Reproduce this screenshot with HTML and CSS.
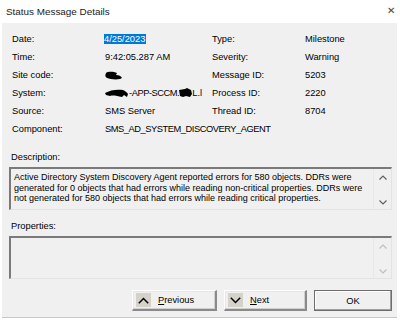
FILE: index.html
```html
<!DOCTYPE html>
<html lang="en">
<head>
    <meta charset="UTF-8">
    <meta name="viewport" content="width=device-width, initial-scale=1.0">
    <title>Status Message Details</title>
    <link rel="stylesheet" href="styles.css">
</head>
<body>
    <div class="window">
        <div class="titlebar">
            <span class="title">Status Message Details</span>
            <span class="close">&#x2715;</span>
        </div>
        <div class="client">
            <div class="details">
                <span class="label">Date:</span>
                <span class="value"><span class="selected">4/25/2023</span></span>
                <span class="label">Type:</span>
                <span class="value">Milestone</span>

                <span class="label">Time:</span>
                <span class="value">9:42:05.287 AM</span>
                <span class="label">Severity:</span>
                <span class="value">Warning</span>

                <span class="label">Site code:</span>
                <span class="value">
                    <svg class="scribble" width="18" height="9" viewBox="0 0 18 9">
                        <path d="M1 2 C4 0 9 1 12 2 L11 4 C14 4 16 5 17 7 L15 8 C10 9 5 8 2 7 C0 6 0 4 1 2 Z" fill="#000"/>
                    </svg>
                </span>
                <span class="label">Message ID:</span>
                <span class="value">5203</span>

                <span class="label">System:</span>
                <span class="value nowrap">
                    <svg class="scribble" width="24" height="9" viewBox="0 0 24 9">
                        <path d="M0 4 C5 1 12 0 18 1 C20 2 22 3 23 5 L22 8 L19 6 L17 8 C12 7 8 6 5 7 L1 6 Z" fill="#000"/>
                    </svg><span class="caps">-APP-SCCM.</span><svg class="scribble" width="13" height="10" viewBox="0 0 13 10">
                        <path d="M0 2 L6 1 L8 0 L12 2 L13 6 L11 9 L7 8 L4 9 L1 8 Z" fill="#000"/>
                    </svg>L.l
                </span>
                <span class="label">Process ID:</span>
                <span class="value">2220</span>

                <span class="label">Source:</span>
                <span class="value">SMS Server</span>
                <span class="label">Thread ID:</span>
                <span class="value">8704</span>

                <span class="label">Component:</span>
                <span class="value wide caps">SMS_AD_SYSTEM_DISCOVERY_AGENT</span>
            </div>

            <div class="section-label">Description:</div>
            <div class="textbox description">
                <div class="text">Active Directory System Discovery Agent reported errors for 580 objects. DDRs were<br>generated for 0 objects that had errors while reading non-critical properties. DDRs were<br>not generated for 580 objects that had errors while reading critical properties.</div>
                <div class="scrollbar">
                    <svg width="8" height="5" viewBox="0 0 8 5"><path d="M0.5 4.5 L4 1 L7.5 4.5" fill="none" stroke="#606060" stroke-width="1.2"/></svg>
                    <svg width="8" height="5" viewBox="0 0 8 5"><path d="M0.5 0.5 L4 4 L7.5 0.5" fill="none" stroke="#606060" stroke-width="1.2"/></svg>
                </div>
            </div>

            <div class="section-label second">Properties:</div>
            <div class="textbox properties">
                <div class="text"></div>
                <div class="scrollbar disabled">
                    <svg width="8" height="5" viewBox="0 0 8 5"><path d="M0.5 4.5 L4 1 L7.5 4.5" fill="none" stroke="#bfbfbf" stroke-width="1.2"/></svg>
                    <svg width="8" height="5" viewBox="0 0 8 5"><path d="M0.5 0.5 L4 4 L7.5 0.5" fill="none" stroke="#bfbfbf" stroke-width="1.2"/></svg>
                </div>
            </div>

            <div class="buttons">
                <button class="btn nav prev">
                    <span class="arrow"><svg width="11" height="7" viewBox="0 0 11 7"><path d="M0.8 6.2 L5.5 1.5 L10.2 6.2" fill="none" stroke="#000" stroke-width="1.5"/></svg></span>
                    <span><u>P</u>revious</span>
                </button>
                <button class="btn nav next">
                    <span class="arrow"><svg width="11" height="7" viewBox="0 0 11 7"><path d="M0.8 0.8 L5.5 5.5 L10.2 0.8" fill="none" stroke="#000" stroke-width="1.5"/></svg></span>
                    <span><u>N</u>ext</span>
                </button>
                <button class="btn ok">OK</button>
            </div>
        </div>
    </div>
</body>
</html>
```

FILE: styles.css
```css
body {
    margin: 0;
    padding: 0;
    background-color: #fff;
    font-family: 'Liberation Sans', Arial, sans-serif;
    font-size: 9.3px;
    color: #000;
}
.window {
    width: 400px;
    height: 322px;
    display: flex;
    flex-direction: column;
    background-color: #fff;
    overflow: hidden;
}
.titlebar {
    height: 23px;
    display: flex;
    align-items: center;
    justify-content: space-between;
    padding: 0 5px 0 6px;
    flex-shrink: 0;
}
.title {
    font-size: 9.9px;
    color: #1a1a1a;
}
.close {
    font-size: 10px;
    color: #444;
    margin-top: -2px;
}
.client {
    flex: 1;
    margin: 0 3px 4px 2px;
    background-color: #f0f0f0;
    border-bottom: 1px solid #c8c8c8;
    padding: 7px 0 0 0;
    display: flex;
    flex-direction: column;
}
.details {
    display: grid;
    grid-template-columns: 93px 107px 93px 1fr;
    grid-auto-rows: 18px;
    align-items: center;
    padding-left: 10px;
}
.label, .value {
    white-space: nowrap;
}
.value {
    display: flex;
    align-items: center;
}
.value.wide {
    grid-column: 2 / 5;
}
.caps {
    letter-spacing: -0.45px;
}
.selected {
    background-color: #0078d7;
    color: #fff;
    padding: 0 1px 0 0;
    margin-left: -1px;
}
.scribble {
    display: block;
}
.section-label {
    margin: 13px 0 0 9px;
    height: 13px;
    line-height: 13px;
}
.section-label.second {
    margin-top: 10px;
}
.description {
    margin-top: 3px;
}
.properties {
    margin-top: 3px;
}
.textbox {
    margin-left: 7px;
    margin-right: 5px;
    height: 43px;
    box-sizing: border-box;
    border-top: 2px solid #7a7a7a;
    border-left: 2px solid #7a7a7a;
    border-right: 1px solid #e3e3e3;
    border-bottom: 1px solid #e3e3e3;
    display: flex;
}
.textbox .text {
    flex: 1;
    padding: 3px 0 0 3px;
    font-size: 9px;
    line-height: 10.5px;
    color: #000;
    white-space: nowrap;
}
.scrollbar {
    width: 17px;
    display: flex;
    flex-direction: column;
    justify-content: space-between;
    align-items: center;
    padding: 6px 0 4px 0;
    border-left: 1px solid #e8e8e8;
}
.buttons {
    display: flex;
    justify-content: flex-end;
    gap: 7px;
    margin: 11px 5px 0 0;
}
.btn {
    height: 21px;
    box-sizing: border-box;
    font-family: 'Liberation Sans', Arial, sans-serif;
    font-size: 9.3px;
    color: #000;
    background-color: #f0f0f0;
    border-top: 1px solid #fff;
    border-left: 1px solid #fff;
    border-right: 2px solid #8a8a8a;
    border-bottom: 2px solid #8a8a8a;
    box-shadow: inset -1px -1px 0 #d0d0d0, inset 1px 1px 0 #e8e8e8;
    padding: 0;
    display: flex;
    align-items: center;
}
.nav {
    width: 85px;
    padding-left: 3px;
    gap: 7px;
}
.next {
    width: 83px;
}
.arrow {
    width: 15px;
    height: 14px;
    background-color: #d5d2ca;
    display: flex;
    align-items: center;
    justify-content: center;
}
.ok {
    width: 78px;
    justify-content: center;
    border: 1px solid #6d6d6d;
    box-shadow: inset -1px -1px 0 #a0a0a0, inset 1px 1px 0 #fff;
}
u {
    text-decoration-thickness: 1px;
    text-underline-offset: 1px;
}
```
